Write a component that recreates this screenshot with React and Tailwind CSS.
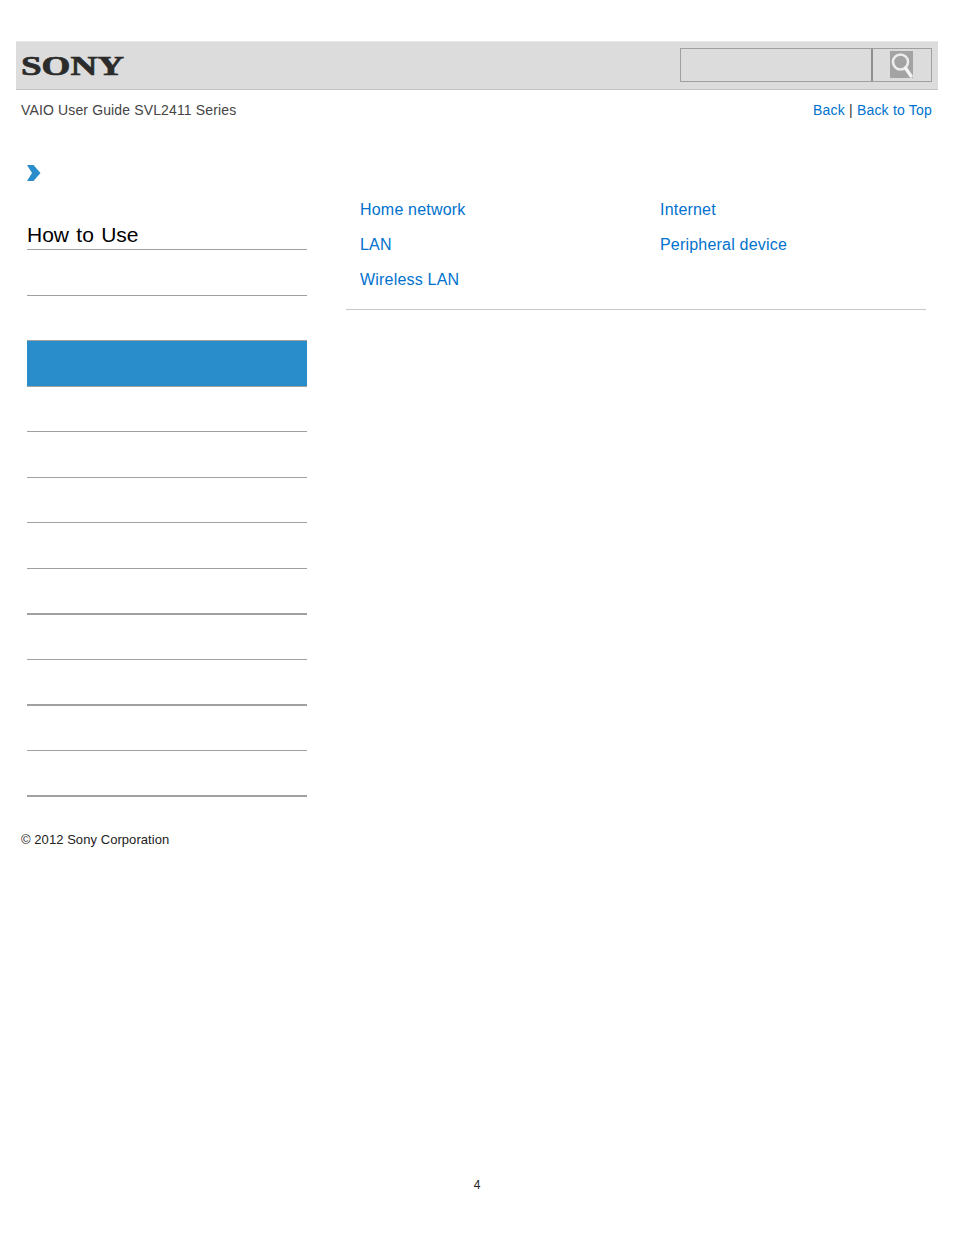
const font = { fontFamily: '"Liberation Sans", Arial, sans-serif' };

const sideRows = [
  { h: 'h-[46px]', line: 'border-b' },
  { h: 'h-[44px]', line: '' },
  { h: 'h-[47px]', line: 'border-t border-b bg-[#2a8dcb]' },
  { h: 'h-[45px]', line: 'border-b' },
  { h: 'h-[46px]', line: 'border-b' },
  { h: 'h-[45px]', line: 'border-b' },
  { h: 'h-[46px]', line: 'border-b' },
  { h: 'h-[46px]', line: 'border-b-2' },
  { h: 'h-[45px]', line: 'border-b' },
  { h: 'h-[46px]', line: 'border-b-2' },
  { h: 'h-[45px]', line: 'border-b' },
  { h: 'h-[46px]', line: 'border-b-2' },
];

function SonyLogo() {
  return (
    <svg width="110" height="30" viewBox="0 0 110 30" className="block">
      <text
        x="4"
        y="24"
        textLength="103"
        lengthAdjust="spacingAndGlyphs"
        fontFamily="'Liberation Serif', serif"
        fontWeight="700"
        fontSize="27"
        fill="#2b2b2b"
        stroke="#2b2b2b"
        strokeWidth="0.7"
      >
        SONY
      </text>
    </svg>
  );
}

function SearchIcon() {
  return (
    <svg width="23" height="27" viewBox="0 0 23 27" className="block">
      <rect width="23" height="27" fill="#a3a3a3" />
      <circle cx="10.5" cy="11" r="7.5" fill="none" stroke="#ececec" strokeWidth="2.6" />
      <path d="M15.5 17 L21 25" stroke="#f4f4f4" strokeWidth="3.4" strokeLinecap="round" />
    </svg>
  );
}

function Chevron() {
  return (
    <svg width="14" height="16" viewBox="0 0 14 16" className="block">
      <path d="M0 0 H6.5 L13.5 8 L6.5 16 H0 L5 8 Z" fill="#2a8dcb" />
    </svg>
  );
}

function TopicLink({ children }) {
  return <a className="block h-[35px] text-[16px] leading-[35px] tracking-[0.2px] text-[#0072ce]">{children}</a>;
}

export default function App() {
  return (
    <div className="relative min-h-[1235px] bg-white px-4 pt-[41px] text-black" style={font}>
      <div className="flex h-[49px] items-start justify-between border-t border-b border-t-[#e6e6e6] border-b-[#c4c4c4] bg-[#dcdcdc] pl-[1px] pr-[6px]">
        <div className="pt-[9px]">
          <SonyLogo />
        </div>
        <div className="mt-[6px] flex h-[34px] w-[252px] border border-[#a0a0a0]">
          <div className="w-[192px] border-r-2 border-[#8f8f8f]" />
          <div className="flex flex-1 items-start pl-[17px] pt-[2px]">
            <SearchIcon />
          </div>
        </div>
      </div>

      <div className="flex justify-between pl-[5px] pr-[6px] pt-[12px] text-[14px] leading-[17px] tracking-[0.14px]">
        <span className="text-[#444444]">VAIO User Guide SVL2411 Series</span>
        <span className="tracking-[0.2px] text-[#333333]">
          <a className="text-[#0072ce]">Back</a> | <a className="text-[#0072ce]">Back to Top</a>
        </span>
      </div>

      <div className="flex pl-[11px] pt-[46px]">
        <div className="w-[280px]">
          <Chevron />
          <div className="h-[69px] border-b border-[#a0a0a0] pt-[41px] text-[21px] leading-[26px] [word-spacing:1.5px]">
            How to Use
          </div>
          {sideRows.map((row, i) => (
            <div key={i} className={`${row.h} border-[#a0a0a0] ${row.line}`} />
          ))}
        </div>

        <div className="ml-[39px] mt-[27px] w-[580px]">
          <div className="grid h-[118px] grid-cols-[300px_1fr] content-start border-b border-[#c8c8c8] pl-[14px]">
            <div>
              <TopicLink>Home network</TopicLink>
              <TopicLink>LAN</TopicLink>
              <TopicLink>Wireless LAN</TopicLink>
            </div>
            <div>
              <TopicLink>Internet</TopicLink>
              <TopicLink>Peripheral device</TopicLink>
            </div>
          </div>
        </div>
      </div>

      <div className="pl-[5px] pt-[35px] text-[13px] leading-[16px] tracking-[0.06px] text-[#222222]">© 2012 Sony Corporation</div>
      <div className="pt-[330px] text-center text-[12px] leading-[14px] text-[#222222]">4</div>
    </div>
  );
}
